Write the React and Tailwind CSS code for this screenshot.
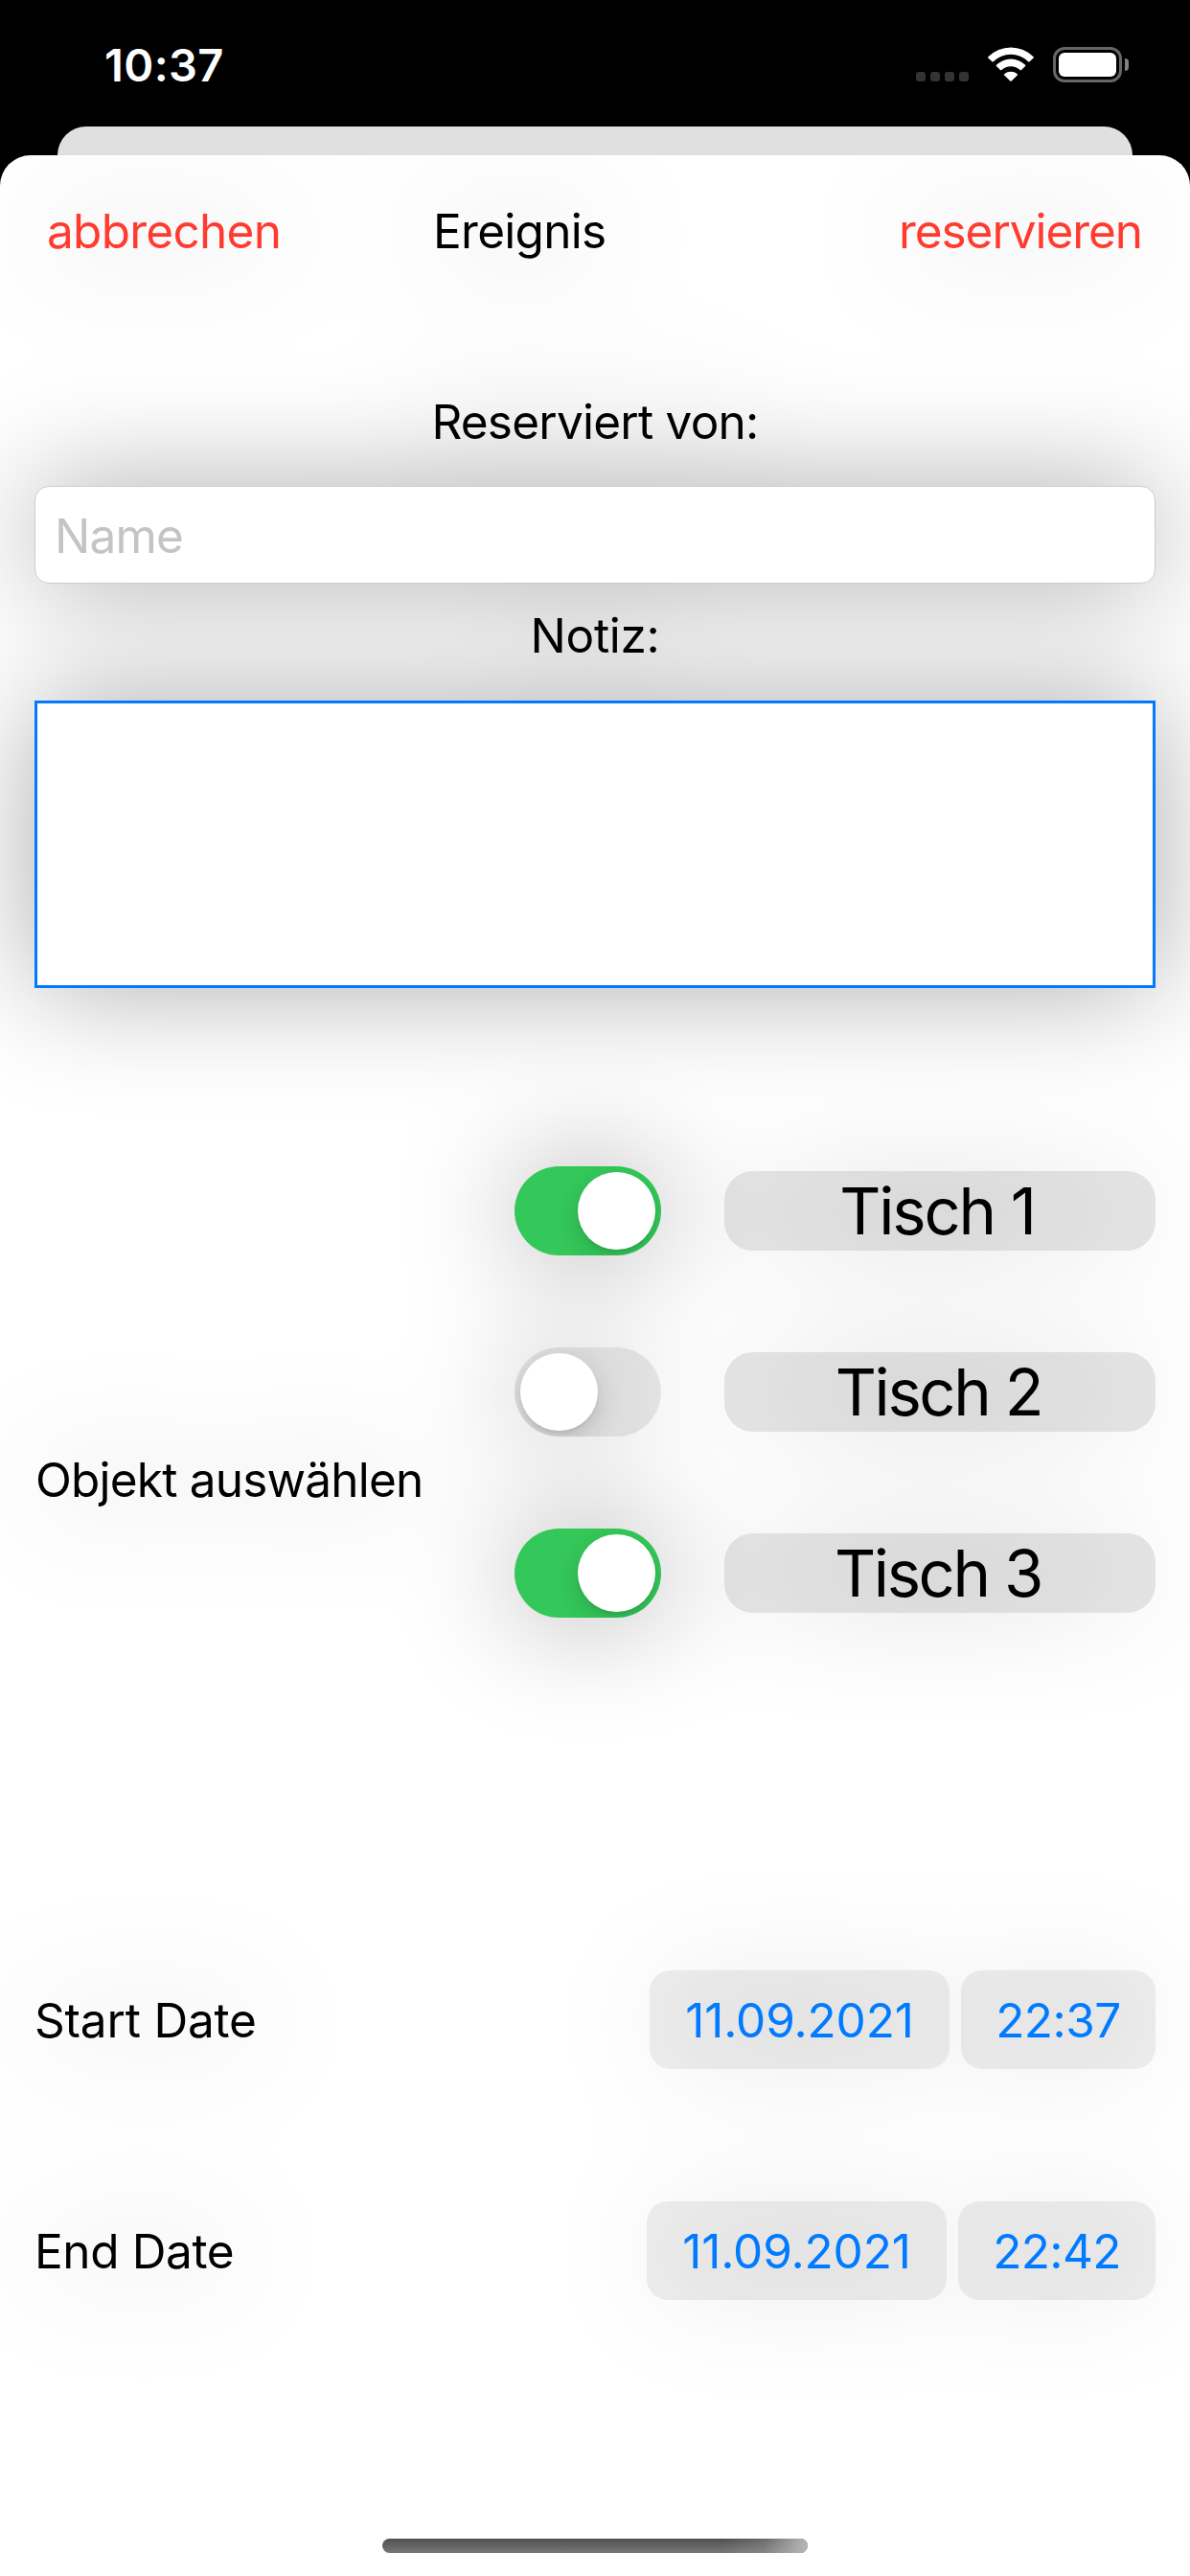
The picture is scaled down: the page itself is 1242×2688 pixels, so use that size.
import React, { useState } from "react";

function StatusBar() {
  return (
    <div className="flex h-[132px] items-start justify-between bg-black pl-[109px] pr-[64px]">
      <div className="mt-[38px] text-[47px] leading-[60px] font-semibold tracking-[0.38px] text-white">10:37</div>
      <div className="mt-[49px] flex items-start">
        <div className="mt-[26px] flex gap-[5px]">
          {[0, 1, 2, 3].map((i) => (
            <div key={i} className="h-[10px] w-[10px] rounded-[3px] bg-[#333333]" />
          ))}
        </div>
        <svg className="ml-[20px]" width="48" height="36" viewBox="0 0 48 36" fill="#fff">
          <path d="M0.4 10.2 A33.5 33.5 0 0 1 47.6 10.2 Q48.3 10.9 47.6 11.6 L43.6 15.3 Q42.9 15.9 42.2 15.3 A26 26 0 0 0 5.8 15.3 Q5.1 15.9 4.4 15.3 L0.4 11.6 Q-0.3 10.9 0.4 10.2 Z" />
          <path d="M8.9 18.7 A21.8 21.8 0 0 1 39.1 18.7 Q39.7 19.4 39.1 20 L35 24 Q34.4 24.5 33.7 24 A14.2 14.2 0 0 0 14.3 24 Q13.6 24.5 13 24 L8.9 20 Q8.3 19.4 8.9 18.7 Z" />
          <path d="M17.2 28.2 A10.6 10.6 0 0 1 30.8 28.2 Q31.4 28.8 30.8 29.4 L24.7 35.4 Q24 36 23.3 35.4 L17.2 29.4 Q16.6 28.8 17.2 28.2 Z" />
        </svg>
        <div className="ml-[20px] h-[37px] w-[72px] rounded-[12px] border-3 border-[#666666] p-[3px]">
          <div className="h-[25px] w-[60px] rounded-[6px] bg-white" />
        </div>
        <div className="mt-[12px] ml-[3px] h-[13px] w-[4px] rounded-r-full bg-[#808080]" />
      </div>
    </div>
  );
}

function Toggle({ on, onChange }) {
  return (
    <button
      role="switch"
      aria-checked={on}
      onClick={onChange}
      className={`flex h-[93px] w-[153px] items-center overflow-hidden rounded-full p-[6px] ${
        on ? "justify-end bg-[#34c759]" : "justify-start bg-[#787878]/16"
      }`}
    >
      <span className="h-[81px] w-[81px] rounded-full bg-white shadow-[0_9px_24px_rgba(0,0,0,0.15),0_3px_3px_rgba(0,0,0,0.06)]" />
    </button>
  );
}

function Chip({ children, className }) {
  return (
    <div className={`flex h-[103px] items-center justify-center rounded-[22px] bg-[#767676]/12 text-[#007aff] ${className}`}>
      {children}
    </div>
  );
}

const TABLES = [
  { name: "Tisch 1", text: "pr-[6px] tracking-[-2.21px]" },
  { name: "Tisch 2", text: "pr-[3px] tracking-[-2.43px]" },
  { name: "Tisch 3", text: "pr-[4px] tracking-[-2.43px]" },
];

export default function App() {
  const [selected, setSelected] = useState([true, false, true]);
  const flip = (i) => setSelected(selected.map((v, j) => (j === i ? !v : v)));

  return (
    <div className="flex h-[2688px] w-[1242px] flex-col overflow-hidden bg-black font-[Inter,sans-serif] text-[49.5px] leading-[60px] whitespace-nowrap text-black">
      <StatusBar />
      <div className="mx-[60px] h-[30px] shrink-0 rounded-t-[30px] bg-[#e0e0e0]" />
      <div className="flex flex-1 flex-col overflow-hidden rounded-t-[32px] bg-white">
        <div className="flex flex-1 flex-col px-[36px] [filter:drop-shadow(0_0_60px_rgba(0,0,0,0.33))]">
          <div className="mt-[49px] flex h-[60px]">
            <button className="ml-[13px] w-[403px] text-left tracking-[-0.72px] text-[#ff3b30]">abbrechen</button>
            <div className="w-[486px] tracking-[-0.71px]">Ereignis</div>
            <button className="tracking-[-1.07px] text-[#ff3b30]">reservieren</button>
          </div>

          <div className="mt-[139px] text-center tracking-[-0.76px]">Reserviert von:</div>
          <input
            placeholder="Name"
            className="mt-[37px] h-[102px] w-full rounded-[15px] border border-[#cccccc] bg-white pt-[2px] pl-[20px] tracking-[-0.82px] outline-none placeholder:text-[#c4c4c6]"
          />
          <div className="mt-[24px] text-center tracking-[-0.3px]">Notiz:</div>
          <textarea className="mt-[38px] block h-[300px] w-full resize-none border-3 border-[#007aff] bg-white outline-none" />

          <div className="mt-[186px] flex h-[654px]">
            <div className="w-[501px] self-center pl-px tracking-[-0.79px]">Objekt auswählen</div>
            <div className="flex flex-col gap-[96px]">
              {TABLES.map((t, i) => (
                <div key={t.name} className="flex h-[93px] items-center gap-[66px]">
                  <Toggle on={selected[i]} onChange={() => flip(i)} />
                  <div
                    className={`flex h-[83px] w-[450px] items-center justify-center rounded-[30px] bg-[#808080]/20 text-[67px] ${t.text}`}
                  >
                    {t.name}
                  </div>
                </div>
              ))}
            </div>
          </div>

          <div className="mt-[185px] flex h-[103px] items-center gap-[12px]">
            <div className="flex-1 tracking-[-0.18px]">Start Date</div>
            <Chip className="w-[313px] tracking-[-0.14px]">11.09.2021</Chip>
            <Chip className="w-[203px] tracking-[-0.5px]">22:37</Chip>
          </div>
          <div className="mt-[138px] flex h-[103px] items-center gap-[12px]">
            <div className="flex-1 tracking-[-0.39px]">End Date</div>
            <Chip className="w-[313px] tracking-[-0.14px]">11.09.2021</Chip>
            <Chip className="w-[206px] tracking-[-0.63px]">22:42</Chip>
          </div>
        </div>

        <div className="mb-[24px] ml-[399px] h-[15px] w-[444px] overflow-hidden rounded-full bg-linear-to-b from-[#505050] to-[#777777]">
          <div className="ml-auto h-full w-[90px] bg-linear-to-r from-[#b8b8b8]/0 via-[#b8b8b8]/25 to-[#b8b8b8]" />
        </div>
      </div>
    </div>
  );
}
